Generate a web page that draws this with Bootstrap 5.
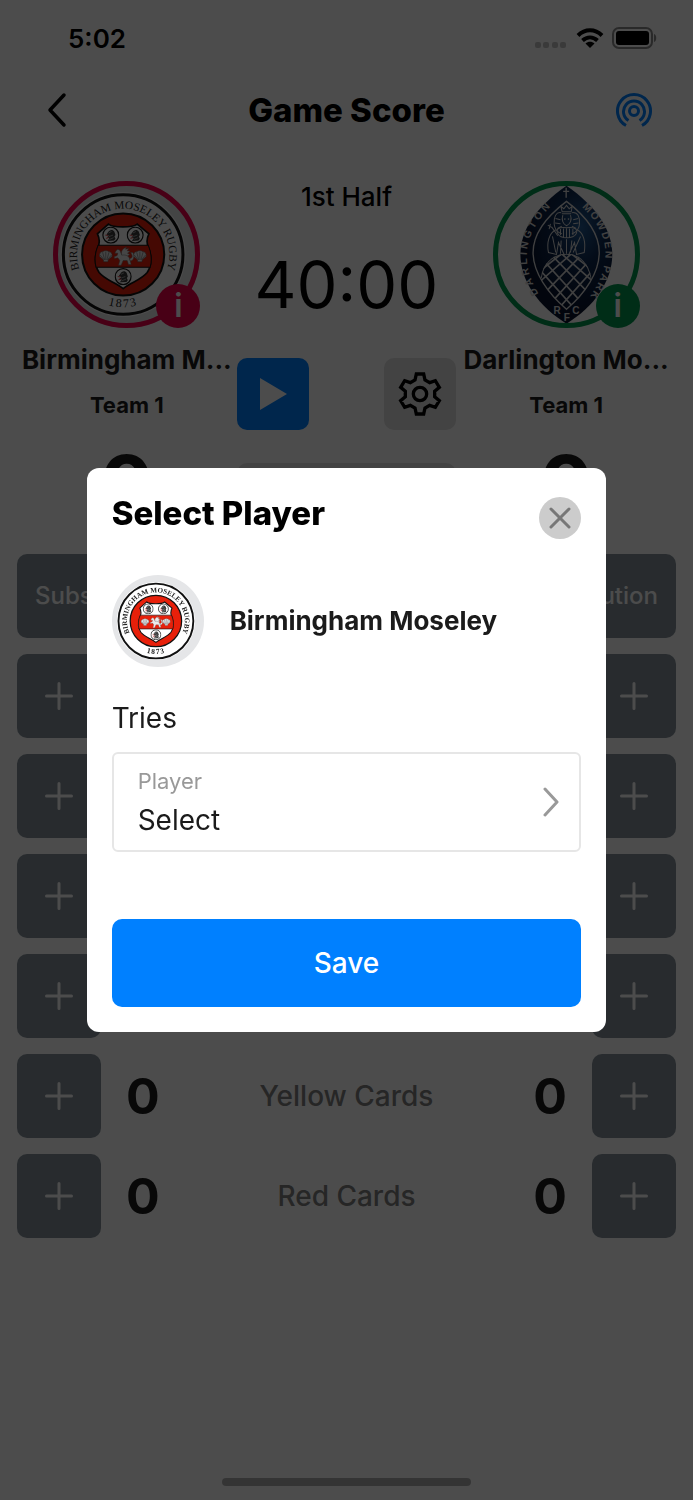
<!DOCTYPE html>
<html lang="en">
<head>
<meta charset="utf-8">
<meta name="viewport" content="width=device-width, initial-scale=1">
<title>Game Score</title>
<link href="https://cdn.jsdelivr.net/npm/bootstrap@5.3.0/dist/css/bootstrap.min.css" rel="stylesheet">
<style>
  body { font-family: Inter, "Liberation Sans", sans-serif; color: #1b1b1b; background: #fff; }
  button { font-family: inherit; }
  svg { display: block; flex-shrink: 0; }
  .status-bar { height: 76px; padding: 0 36px 0 68px; color: #000; font-size: 26px; font-weight: 600; }
  .title-bar { height: 68px; padding: 0 40px; color: #000; }
  .page-title { font-size: 33px; line-height: 40px; font-weight: 800; }
  .gutter { padding-left: 17px; padding-right: 17px; }
  .teams { margin-top: 37px; }
  .crest-wrap { width: 147px; height: 147px; }
  .info-badge { right: 0; bottom: 0; width: 44px; height: 44px; font-size: 32px; line-height: 44px; font-weight: 600; color: #fff; }
  .info-home { background: #f0004c; }
  .info-away { background: #00964d; }
  .team-name { font-size: 26px; line-height: 32px; font-weight: 700; }
  .team-squad { margin-top: 15px; font-size: 22px; line-height: 28px; font-weight: 700; }
  .team-score { margin-top: 25px; font-size: 80px; line-height: 80px; font-weight: 700; }
  .clock-col { color: #000; row-gap: 33px; }
  .half { font-size: 26px; line-height: 31px; font-weight: 500; }
  .clock { font-size: 65px; line-height: 80px; }
  .tool { width: 72px; height: 72px; border-radius: 10px; }
  .tool-play, .btn-save { background: #0080ff; color: #fff; }
  .tool-gear, .clock-foot { background: #e0e0e0; color: #000; }
  .clock-foot { height: 56px; border-radius: 10px; }
  .stats { margin-top: 30px; row-gap: 16px; }
  .stat-btn { height: 84px; border-radius: 10px; background: #86929c; color: #fff; }
  .stat-btn:hover { background: #86929c; color: #fff; }
  .stat-add { width: 84px; }
  .stat-sub { padding: 0 18px; font-size: 24px; font-weight: 500; }
  .stat-value { margin: 0 25px; font-size: 50px; line-height: 60px; font-weight: 700; }
  .stat-name { font-size: 28px; line-height: 32px; font-weight: 500; color: #808080; }
  .home-bar { width: 36%; height: 8px; margin-bottom: 14px; background: #b0b0b0; }
  .scrim { background: rgba(0, 0, 0, .7); }
  .scrim .modal-dialog { width: 75%; max-width: none; margin-top: 0; margin-bottom: 0; min-height: 100%; }
  .sheet { padding: 25px; border: 0; border-radius: 12px; }
  .sheet-title { font-size: 33px; line-height: 40px; font-weight: 800; color: #000; }
  .sheet-close { width: 42px; height: 42px; margin-top: 4px; background: #ccc; color: #777; }
  .sheet-team { margin-top: 36px; gap: 26px; font-size: 26px; line-height: 32px; font-weight: 700; }
  .sheet-event { margin: 35px 0 18px; font-size: 28px; line-height: 32px; }
  .player-field { height: 100px; padding: 0 20px 0 24px; border: 2px solid #e6e6e6; border-radius: 6px; }
  .player-field label { font-size: 22px; line-height: 28px; color: #999; }
  .player-field select { appearance: none; border: 0; padding: 0; margin: 8px 0 0; background: none; font-size: 28px; line-height: 34px; height: 34px; color: #1b1b1b; }
  .btn-save { height: 88px; margin-top: 67px; border-radius: 10px; font-size: 28px; font-weight: 500; }
</style>
</head>
<body>

<svg width="0" height="0" class="position-absolute" aria-hidden="true">
  <defs>
    <radialGradient id="navy" cx=".66" cy=".3" r=".6">
      <stop offset="0" stop-color="#205890"/><stop offset=".45" stop-color="#0d2850"/><stop offset="1" stop-color="#07132e"/>
    </radialGradient>
    <path id="arcTop" d="M150.400 316.500A138 138 0 1 1 409.600 316.500"/>
    <path id="arcBottom" d="M122 268A158 158 0 0 0 438 268"/>
    <path id="arcLeft" d="M216 402C150 310 146 210 256 110"/>
    <path id="arcRight" d="M303 100C430 196 436 306 330 430"/>
    <clipPath id="globeClip"><path d="M211 338C218 290 250 266 288 266C326 266 352 290 363 338C350 372 326 402 288 430C252 402 226 372 211 338Z"/></clipPath>
    <symbol id="beast" viewBox="-24 -24 48 48">
      <circle r="22" fill="#fff" stroke="#1a1a1a" stroke-width="3.500"/>
      <path d="M-8 -7C-4 -16 6 -17 10 -9L13 0L10 4L13 10L9 15L-9 16L-4 8L-11 6L-5 2L-12 -2Z" fill="#3b3b3b"/>
      <path d="M-6 -6L2 -10M-5 4L6 0M-4 12L8 7" stroke="#b9b9b9" stroke-width="2" fill="none"/>
      <path d="M-15 0L-7 1M-13 9L-6 7" stroke="#d33" stroke-width="2.500"/>
    </symbol>
    <symbol id="scallop" viewBox="-20 -18 40 36">
      <path d="M-6 15L6 15L7 9L18 0C20 -8 14 -14 8 -14C4 -18 -4 -18 -8 -14C-14 -14 -20 -8 -18 0L-7 9Z" fill="#e4e4e4" stroke="#555" stroke-width="1.500"/>
      <path d="M0 10V-14M-3 10L-9 -12M3 10L9 -12M-5 9L-16 -4M5 9L16 -4" stroke="#555" stroke-width="1.500"/>
    </symbol>
    <symbol id="moseley" viewBox="70 48 440 440">
      <circle cx="290" cy="268" r="220" fill="#e5e6e8"/>
      <circle cx="280" cy="268" r="187" fill="#fff"/>
      <circle cx="280" cy="268" r="179" fill="#fff" stroke="#111" stroke-width="9"/>
      <circle cx="280" cy="268" r="123" fill="#e8200a" stroke="#111" stroke-width="6"/>
      <path d="M236 177C250 188 308 188 322 177L357 206C349 222 351 238 357 250C366 276 366 300 352 322C334 344 306 350 280 370C254 350 226 344 208 322C194 300 194 276 203 250C209 238 211 222 203 206Z" fill="#fff" stroke="#111" stroke-width="5"/>
      <path d="M205 240H355C364 262 367 284 361 306H199C193 284 196 262 205 240Z" fill="#e8200a" stroke="#111" stroke-width="3"/>
      <use href="#beast" x="217" y="184" width="52" height="52"/>
      <use href="#beast" x="290" y="184" width="52" height="52"/>
      <use href="#beast" x="254" y="308" width="52" height="52"/>
      <use href="#scallop" x="207" y="255" width="42" height="38"/>
      <use href="#scallop" x="309" y="255" width="42" height="38"/>
      <g fill="#ececec" stroke="#666" stroke-width="1.500">
        <path d="M276 274C272 262 276 250 290 246L287 252L297 250L292 257L301 258L293 264L300 268L288 276Z"/>
        <path d="M258 258C262 250 270 252 272 260L276 270C286 268 298 272 300 282L304 298H296L292 286L280 286L274 300H266L270 286L264 278L254 280L253 275L262 271L264 264L255 264Z"/>
        <path d="M299 280C312 280 306 266 302 262L309 262C315 272 312 288 301 287Z"/>
      </g>
      <g font-family="'Liberation Serif', serif" fill="#222">
        <text font-size="34"><textPath href="#arcTop" startOffset="50%" text-anchor="middle">BIRMINGHAM MOSELEY RUGBY</textPath></text>
        <text font-size="36" letter-spacing="5"><textPath href="#arcBottom" startOffset="50%" text-anchor="middle">1873</textPath></text>
      </g>
    </symbol>
    <symbol id="darlington" viewBox="68 48 440 440">
      <path d="M288 62C380 126 425 196 425 268C425 346 372 424 288 475C204 424 150 346 150 268C150 196 196 126 288 62Z" fill="url(#navy)"/>
      <g fill="none" stroke="#d8d8d8">
        <path d="M288 109C350 156 386 206 386 262C386 322 344 384 288 432C232 384 188 322 188 262C188 206 226 156 288 109Z" stroke-width="4"/>
        <path d="M287 68V98M278 79H296" stroke-width="4"/>
        <g clip-path="url(#globeClip)" stroke-width="5">
          <path d="M211 338C218 290 250 266 288 266C326 266 352 290 363 338" stroke-width="6"/>
          <path d="M190 330L300 460M196 300L330 450M214 280L350 430M236 262L370 400M262 256L380 360M290 256L384 330M386 330L276 460M380 300L246 450M362 280L226 430M340 262L206 400M314 256L196 360M286 256L192 330"/>
        </g>
        <g stroke-width="3">
          <path d="M272 143C256 140 250 156 251 176C252 192 262 202 274 206M304 143C322 140 328 156 327 176C326 192 316 202 304 206"/>
          <path d="M275 140L271 124L280 131L288 121L296 131L305 124L302 140ZM274 146H302"/>
          <path d="M277 150C272 164 278 178 288 182C299 178 305 164 300 150M255 160L270 164M254 174L270 176M323 160L308 164M324 174L308 176M261 190L274 183M317 190L304 183"/>
          <path d="M262 206C254 190 266 186 288 188C310 186 324 190 317 206C308 222 270 222 262 206ZM270 192V210M279 190V216M288 190V217M297 190V216M307 192V210"/>
          <path d="M256 194C236 204 228 232 234 262L258 268L264 232L282 270M320 194C340 204 346 232 341 262L318 268L312 232L294 270M288 222V266M246 214L256 262M330 214L308 262M272 226L270 266M304 226L300 262"/>
          <path d="M232 180L246 188M240 176L236 192M244 186L262 212"/>
        </g>
      </g>
      <circle cx="283" cy="162" r="2.500" fill="#d8d8d8"/><circle cx="294" cy="162" r="2.500" fill="#d8d8d8"/>
      <g font-family="'Liberation Sans', sans-serif" font-weight="700" fill="#d8d8d8">
        <text font-size="31" letter-spacing="9"><textPath href="#arcLeft" startOffset="51%" text-anchor="middle">DARLINGTON</textPath></text>
        <text font-size="31" letter-spacing="6"><textPath href="#arcRight" startOffset="50%" text-anchor="middle">MOWDEN PARK</textPath></text>
        <g font-size="30" text-anchor="middle"><text x="260" y="447">R</text><text x="289" y="467">F</text><text x="316" y="447">C</text></g>
      </g>
    </symbol>
    <symbol id="plus" viewBox="0 0 28 28"><path d="M14 1.500V26.500M1.500 14H26.500" stroke="currentColor" stroke-width="3" stroke-linecap="round"/></symbol>
  </defs>
</svg>

<div class="d-flex flex-column min-vh-100">
  <div class="status-bar d-flex align-items-center justify-content-between">
    <span>5:02</span>
    <div class="d-flex align-items-center">
      <svg class="me-2" width="33" height="22" viewBox="0 0 33 22" fill="#c4c4c4"><rect x="0" y="15" width="6" height="6" rx="2"/><rect x="8" y="15" width="6" height="6" rx="2"/><rect x="17" y="15" width="6" height="6" rx="2"/><rect x="25" y="15" width="6" height="6" rx="2"/></svg>
      <svg width="28" height="20" viewBox="0 0 28 20" fill="none" stroke="#000" stroke-width="4"><path d="M2 7.500C9 .5 19 .5 26 7.500"/><path d="M6.500 12.500C11 8.500 17 8.500 21.500 12.500"/><path d="M14 20L9.500 15.500C12 13.300 16 13.300 18.500 15.500Z" fill="#000" stroke="none"/></svg>
      <svg class="ms-2" width="45" height="22" viewBox="0 0 45 22"><rect x="1" y="1" width="39" height="20" rx="6" fill="none" stroke="#8a8a8a" stroke-width="2"/><rect x="4" y="4" width="33" height="14" rx="3"/><path d="M42 7C45 8 45 14 42 15Z" fill="#8a8a8a"/></svg>
    </div>
  </div>

  <header class="title-bar d-flex align-items-center justify-content-between">
    <button class="btn p-0 border-0" aria-label="Back"><svg width="38" height="36" viewBox="0 0 38 36" fill="none" stroke="#000" stroke-width="3.500" stroke-linecap="round" stroke-linejoin="round"><path d="M24 3L10 18L24 33"/></svg></button>
    <h1 class="page-title m-0">Game Score</h1>
    <button class="btn p-0 border-0" aria-label="Broadcast"><svg width="38" height="36" viewBox="0 0 38 36" fill="none" stroke="#0080ff" stroke-width="3"><circle cx="19" cy="19" r="4.500"/><path d="M13.500 28.500A10.500 10.500 0 1 1 24.500 28.500M11 33.500A16.500 16.500 0 1 1 27 33.500"/></svg></button>
  </header>

  <main class="gutter">
    <section class="teams row g-0 text-center">
      <div class="col-4 d-flex flex-column align-items-center">
        <div class="crest-wrap position-relative">
          <svg width="147" height="147" viewBox="0 0 147 147" role="img" aria-label="Birmingham Moseley crest"><use href="#moseley" width="147" height="147"/><circle cx="73.500" cy="73.500" r="71" fill="none" stroke="#f0004c" stroke-width="5"/></svg>
          <button class="info-badge info-home btn p-0 border-0 rounded-circle position-absolute">i</button>
        </div>
        <div class="team-name mt-3">Birmingham M...</div>
        <div class="team-squad">Team 1</div>
        <div class="team-score">0</div>
      </div>
      <div class="clock-col col-4 d-flex flex-column">
        <div class="half">1st Half</div>
        <div class="clock">40:00</div>
        <div class="d-flex justify-content-between">
          <button class="tool tool-play btn p-0 border-0 d-flex align-items-center justify-content-center" aria-label="Start clock"><svg width="28" height="32" viewBox="0 0 28 32"><path d="M1 0L28 16L1 32Z" fill="currentColor"/></svg></button>
          <button class="tool tool-gear btn p-0 border-0 d-flex align-items-center justify-content-center" aria-label="Settings"><svg width="44" height="44" viewBox="-66 -66 132 132" fill="none" stroke="currentColor" stroke-width="10"><path d="M-11 -60H11L15 -42L29 -34L46 -40L58 -20L44 -8V8L58 20L46 40L29 34L15 42L11 60H-11L-15 42L-29 34L-46 40L-58 20L-44 8V-8L-58 -20L-46 -40L-29 -34L-15 -42Z"/><circle r="20"/></svg></button>
        </div>
        <div class="clock-foot"></div>
      </div>
      <div class="col-4 d-flex flex-column align-items-center">
        <div class="crest-wrap position-relative">
          <svg width="147" height="147" viewBox="0 0 147 147" role="img" aria-label="Darlington Mowden Park crest"><use href="#darlington" width="147" height="147"/><circle cx="73.500" cy="73.500" r="71" fill="none" stroke="#00964d" stroke-width="5"/></svg>
          <button class="info-badge info-away btn p-0 border-0 rounded-circle position-absolute">i</button>
        </div>
        <div class="team-name mt-3">Darlington Mo...</div>
        <div class="team-squad">Team 1</div>
        <div class="team-score">0</div>
      </div>
    </section>

    <section class="stats d-flex flex-column">
      <div class="d-flex justify-content-between">
        <button class="stat-btn stat-sub btn border-0">Substitution</button>
        <button class="stat-btn stat-sub btn border-0">Substitution</button>
      </div>
      <div class="d-flex justify-content-between">
        <button class="stat-btn stat-add btn p-0 border-0 d-flex align-items-center justify-content-center" aria-label="Add"><svg width="28" height="28"><use href="#plus"/></svg></button>
        <button class="stat-btn stat-add btn p-0 border-0 d-flex align-items-center justify-content-center" aria-label="Add"><svg width="28" height="28"><use href="#plus"/></svg></button>
      </div>
      <div class="d-flex justify-content-between">
        <button class="stat-btn stat-add btn p-0 border-0 d-flex align-items-center justify-content-center" aria-label="Add"><svg width="28" height="28"><use href="#plus"/></svg></button>
        <button class="stat-btn stat-add btn p-0 border-0 d-flex align-items-center justify-content-center" aria-label="Add"><svg width="28" height="28"><use href="#plus"/></svg></button>
      </div>
      <div class="d-flex justify-content-between">
        <button class="stat-btn stat-add btn p-0 border-0 d-flex align-items-center justify-content-center" aria-label="Add"><svg width="28" height="28"><use href="#plus"/></svg></button>
        <button class="stat-btn stat-add btn p-0 border-0 d-flex align-items-center justify-content-center" aria-label="Add"><svg width="28" height="28"><use href="#plus"/></svg></button>
      </div>
      <div class="d-flex justify-content-between">
        <button class="stat-btn stat-add btn p-0 border-0 d-flex align-items-center justify-content-center" aria-label="Add"><svg width="28" height="28"><use href="#plus"/></svg></button>
        <button class="stat-btn stat-add btn p-0 border-0 d-flex align-items-center justify-content-center" aria-label="Add"><svg width="28" height="28"><use href="#plus"/></svg></button>
      </div>
      <div class="d-flex align-items-center">
        <button class="stat-btn stat-add btn p-0 border-0 d-flex align-items-center justify-content-center" aria-label="Add yellow card, home"><svg width="28" height="28"><use href="#plus"/></svg></button>
        <span class="stat-value">0</span>
        <span class="stat-name flex-grow-1 text-center">Yellow Cards</span>
        <span class="stat-value">0</span>
        <button class="stat-btn stat-add btn p-0 border-0 d-flex align-items-center justify-content-center" aria-label="Add yellow card, away"><svg width="28" height="28"><use href="#plus"/></svg></button>
      </div>
      <div class="d-flex align-items-center">
        <button class="stat-btn stat-add btn p-0 border-0 d-flex align-items-center justify-content-center" aria-label="Add red card, home"><svg width="28" height="28"><use href="#plus"/></svg></button>
        <span class="stat-value">0</span>
        <span class="stat-name flex-grow-1 text-center">Red Cards</span>
        <span class="stat-value">0</span>
        <button class="stat-btn stat-add btn p-0 border-0 d-flex align-items-center justify-content-center" aria-label="Add red card, away"><svg width="28" height="28"><use href="#plus"/></svg></button>
      </div>
    </section>
  </main>

  <div class="home-bar rounded-pill mt-auto mx-auto"></div>
</div>

<div class="modal scrim d-block" role="dialog" aria-modal="true" aria-labelledby="sheetTitle">
  <div class="modal-dialog modal-dialog-centered">
    <div class="modal-content sheet">
      <div class="d-flex justify-content-between align-items-start">
        <h2 class="sheet-title m-0" id="sheetTitle">Select Player</h2>
        <button class="sheet-close btn p-0 border-0 rounded-circle d-flex align-items-center justify-content-center" aria-label="Close"><svg width="24" height="24" viewBox="0 0 24 24"><path d="M3 3L21 21M21 3L3 21" stroke="currentColor" stroke-width="3" stroke-linecap="round"/></svg></button>
      </div>
      <div class="sheet-team d-flex align-items-center">
        <svg width="92" height="92" role="img" aria-label="Birmingham Moseley crest"><use href="#moseley"/></svg>
        <span>Birmingham Moseley</span>
      </div>
      <div class="sheet-event">Tries</div>
      <div class="player-field d-flex align-items-center">
        <div class="flex-grow-1 d-flex flex-column">
          <label for="player">Player</label>
          <select id="player"><option>Select</option></select>
        </div>
        <svg width="16" height="30" viewBox="0 0 16 30" fill="none" stroke="#999" stroke-width="3" stroke-linecap="round" stroke-linejoin="round"><path d="M2 2L14 15L2 28"/></svg>
      </div>
      <button class="btn-save btn w-100 border-0">Save</button>
    </div>
  </div>
</div>

<script src="https://cdn.jsdelivr.net/npm/bootstrap@5.3.0/dist/js/bootstrap.bundle.min.js"></script>
</body>
</html>
